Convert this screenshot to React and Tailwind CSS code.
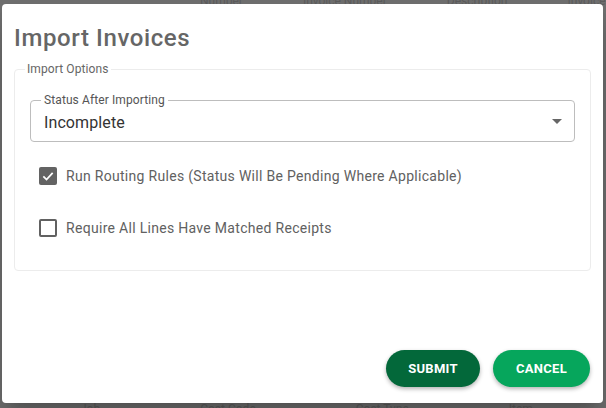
import React from "react";

export default function App() {
  return (
    <div className="relative w-[606px] h-[408px] overflow-hidden bg-[#6f6f6f]" style={{ fontFamily: "Roboto, 'Liberation Sans', sans-serif" }}>
      {/* faint background page behind the modal */}
      <div className="flex flex-col justify-between h-full text-[12px] leading-[14px] text-[#5c5c5c] whitespace-nowrap">
        <div className="flex gap-[60px] pl-[200px] mt-[-6px]">
          <span>Number</span>
          <span>Invoice Number</span>
          <span>Description</span>
          <span>Invoice Date</span>
        </div>
        <div className="flex gap-[100px] pl-[80px] mb-[-8px]">
          <span>Job</span>
          <span>Cost Code</span>
          <span>Cost Type</span>
          <span>Item</span>
        </div>
      </div>
      <div className="absolute left-[2px] top-[4px] w-[601px] h-[399px] bg-white rounded-[4px] shadow-[0_11px_15px_-7px_rgba(0,0,0,0.2),0_24px_38px_3px_rgba(0,0,0,0.14)] flex flex-col">
        <div className="pl-[12px] pt-[18px] h-[58px] text-[24px] font-medium leading-[32px] tracking-[0.6px] text-[#666666]">Import Invoices</div>
        <div className="px-[12px]">
          <fieldset className="border border-[#ececec] rounded-[4px] h-[209px] px-[15px] pt-[2px] m-0">
            <legend className="px-[2px] ml-[-5px] text-[12px] leading-[14px] tracking-[0.1px] text-[#666666]">Import Options</legend>
            <fieldset className="relative mt-[16px] h-[48px] border border-[#bdbdbd] rounded-[4px] px-[13px] m-0">
              <legend className="px-[3px] ml-[-3px] text-[12px] leading-[12px] tracking-[0.1px] text-[#555555]">Status After Importing</legend>
              <div className="text-[16px] text-[#333333] leading-[20px] mt-[7px] tracking-[0.1px]">Incomplete</div>
              <svg className="absolute right-[12px] top-[13px]" width="10" height="5" viewBox="0 0 10 5">
                <path d="M0 0 L10 0 L5 5 Z" fill="#666666" />
              </svg>
            </fieldset>
            <div className="flex flex-col gap-[30px] mt-[23px] ml-[9px]">
              <label className="flex items-center h-[22px]">
                <span className="w-[18px] h-[18px] rounded-[2px] bg-[#636363] flex items-center justify-center">
                  <svg width="14" height="14" viewBox="0 0 24 24">
                    <path d="M4 12.5 L9.5 18 L20 6.5" stroke="white" strokeWidth="3" fill="none" />
                  </svg>
                </span>
                <span className="ml-[9px] text-[14px] tracking-[0.3px] text-[#616161]">Run Routing Rules (Status Will Be Pending Where Applicable)</span>
              </label>
              <label className="flex items-center h-[22px]">
                <span className="w-[18px] h-[18px] rounded-[2px] border-2 border-[#616161]"></span>
                <span className="ml-[9px] text-[14px] tracking-[0.3px] text-[#616161]">Require All Lines Have Matched Receipts</span>
              </label>
            </div>
          </fieldset>
        </div>
        <div className="flex-1"></div>
        <div className="flex justify-end gap-[13px] pr-[13px] pb-[16px]">
          <button className="w-[94px] h-[37px] rounded-full bg-[#03683a] text-white text-[13px] font-bold tracking-[0.3px] shadow-[0_2px_4px_rgba(0,0,0,0.3)]">SUBMIT</button>
          <button className="w-[97px] h-[37px] rounded-full bg-[#06a65c] text-white text-[13px] font-bold tracking-[0.3px] shadow-[0_2px_4px_rgba(0,0,0,0.3)]">CANCEL</button>
        </div>
      </div>
    </div>
  );
}
